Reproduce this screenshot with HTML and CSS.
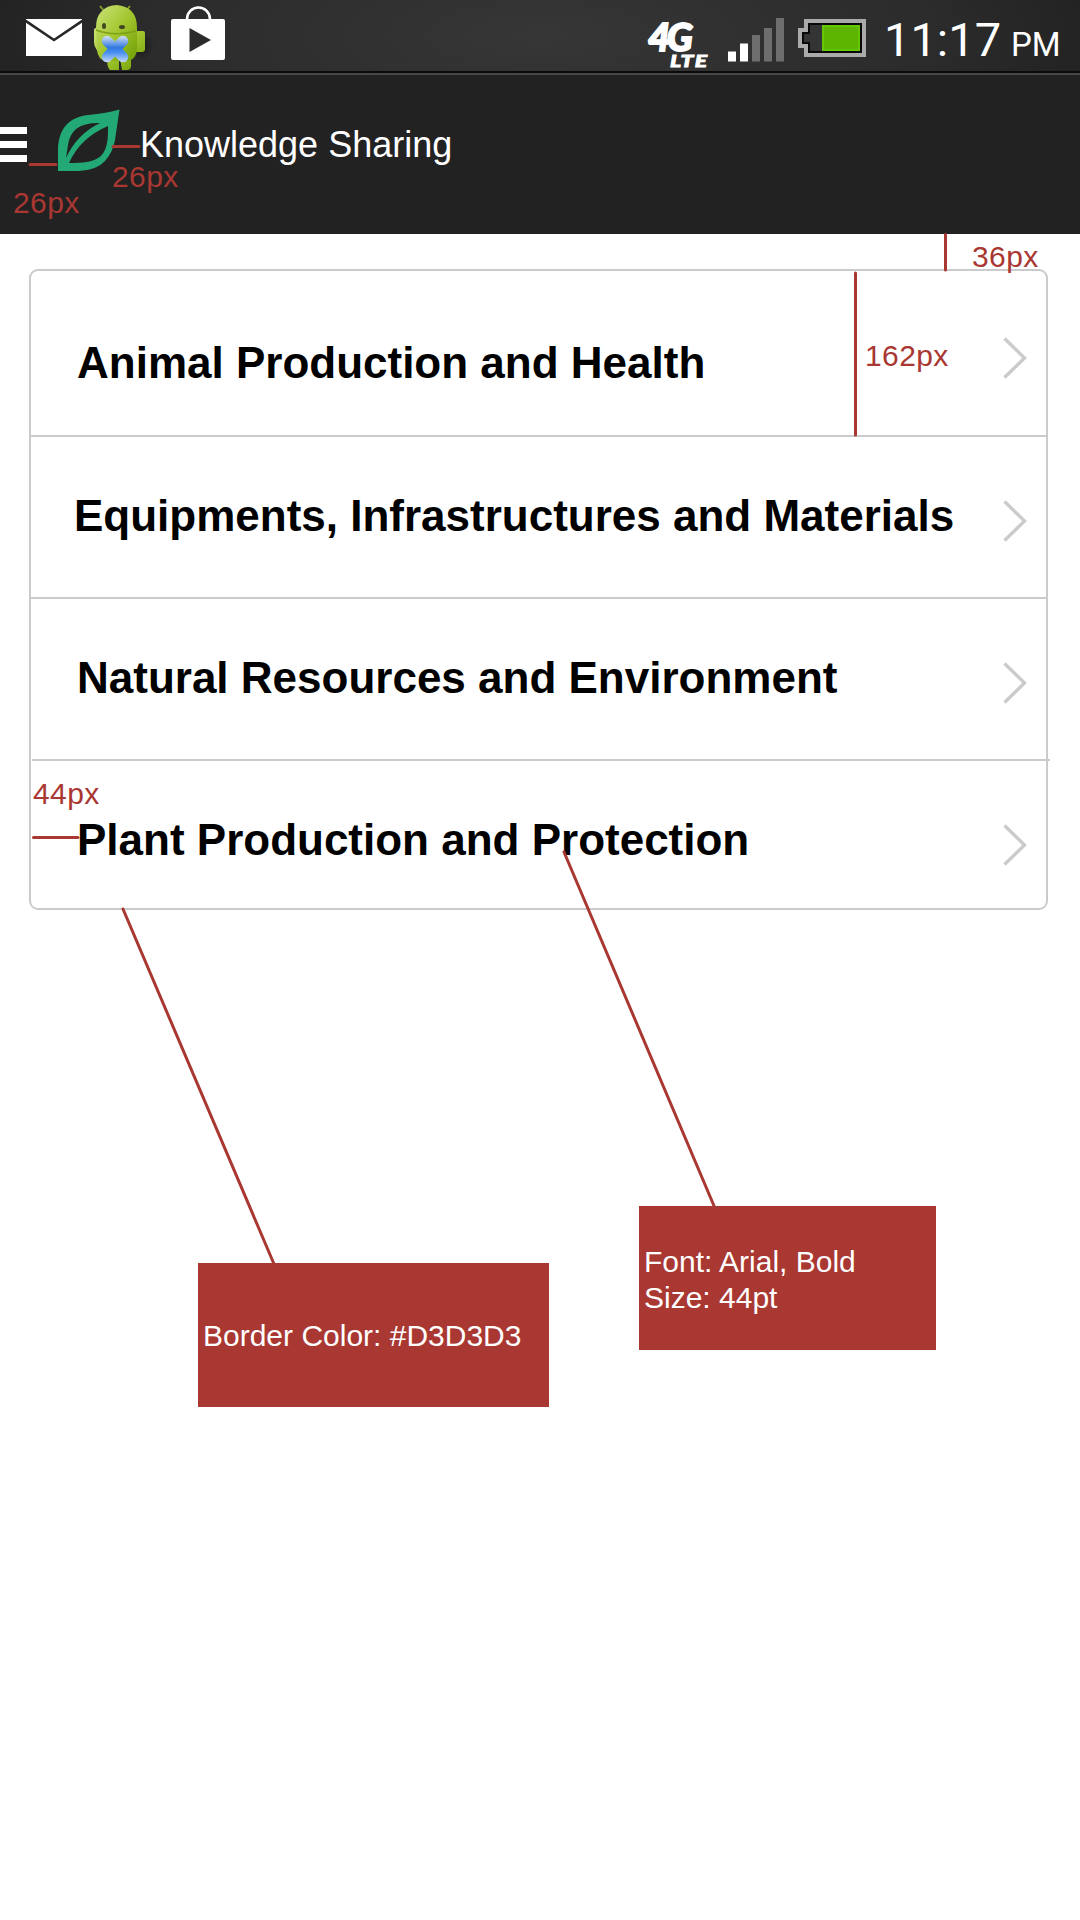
FILE: index.html
```html
<!DOCTYPE html>
<html lang="en">
<head>
<meta charset="utf-8">
<title>Knowledge Sharing</title>
<link rel="stylesheet" href="styles.css">
</head>
<body>
<div class="screen">
  <div class="status-bar">
    <div class="notifications">
      <svg class="mail" width="56" height="37" viewBox="0 0 56 37"><path fill="#fff" d="M0 0H56V37H0Z"/><path d="M-1 1.500L28 21L57 1.500" fill="none" stroke="#282828" stroke-width="2.600"/></svg>
      <svg class="robot" width="64" height="70" viewBox="0 0 64 70">
        <defs>
          <linearGradient id="green" x1="0" y1="0" x2="1" y2="1"><stop offset="0" stop-color="#cbe37a"/><stop offset=".5" stop-color="#a3c62f"/><stop offset="1" stop-color="#6f9d04"/></linearGradient>
          <linearGradient id="blue" gradientUnits="userSpaceOnUse" x1="0" y1="36" x2="0" y2="62"><stop offset="0" stop-color="#d3e0f5"/><stop offset=".45" stop-color="#2f78e0"/><stop offset=".65" stop-color="#4c92f2"/><stop offset="1" stop-color="#c2d8f8"/></linearGradient>
          <radialGradient id="shade"><stop offset="0" stop-color="#000" stop-opacity=".5"/><stop offset="1" stop-color="#000" stop-opacity="0"/></radialGradient>
        </defs>
        <ellipse cx="51" cy="46" rx="13" ry="14" fill="url(#shade)"/>
        <path d="M10 6l4 5M40 6l-4 5" stroke="#7d9c2a" stroke-width="2"/>
        <path fill="url(#green)" d="M4 30q0-2 2-2h3v25q-5-6-5-11ZM46 33q0-2 2-2h5q2 0 2 2v16q0 3-3 3h-6ZM18 58h11v12h-9q-4-4-2-12ZM30 58h11v9q-1 3-4 3h-5Z"/>
        <path fill="url(#green)" d="M6 28Q6 17 11 12Q17 5 27 5Q38 6 43 13Q47 18 47 28V50Q46 60 37 61H16Q8 60 7 50Z"/>
        <path d="M6 30Q25 37 46 31" fill="none" stroke="#7da018" stroke-width="1.400"/>
        <ellipse cx="14" cy="26" rx="2" ry="3" fill="#424822"/><ellipse cx="32" cy="27" rx="3" ry="2" fill="#424822"/>
        <path d="M17 41L33 57M33 41L17 57" stroke="url(#blue)" stroke-width="10.500" stroke-linecap="round"/>
      </svg>
      <svg class="bag" width="54" height="55" viewBox="0 0 54 55"><path d="M16 15V13a11.500 11.500 0 0 1 23 0v2" fill="none" stroke="#fff" stroke-width="2.600"/><rect y="13" width="54" height="41" rx="2" fill="#fff"/><path d="M18.500 22V46L40 34Z" fill="#2c2c2c"/></svg>
    </div>
    <div class="system">
      <div class="network"><span class="gen">4G</span><span class="lte">LTE</span></div>
      <svg class="signal" width="56" height="44" viewBox="0 0 56 44"><path fill="#fff" d="M0 33.500h8V43.500H0ZM12 25.500h8V43.500h-8Z"/><path fill="#6e6e6e" d="M24 17h8V43.500h-8ZM36 10h8V43.500h-8ZM48 0h8V43.500h-8Z"/></svg>
      <svg class="battery" width="68" height="38" viewBox="0 0 68 38"><path fill="#aaa" d="M6 0H68V38H6V29H0V9H6Z"/><path fill="#080808" d="M10 4H64V34H10V25H4V13H10Z"/><path fill="#343434" d="M12 6H24V32H12V23H6V15H12Z"/><path fill="#65c704" d="M24 6H62V32H24Z"/><path fill="#5db501" d="M26 8H60V30H26Z"/></svg>
      <div class="clock">11:17<span class="meridiem">PM</span></div>
    </div>
  </div>
  <header class="app-bar">
    <svg class="menu" width="27" height="35" viewBox="0 0 27 35"><path fill="#fff" d="M0 0H27V7H0ZM0 14H27V21H0ZM0 28H27V35H0Z"/></svg>
    <svg class="leaf" width="63" height="63" viewBox="0 0 63 63"><path fill="#22a976" fill-rule="evenodd" d="M62.500 .500Q50 4 31 6C12 8 1 20 1 42V62H22Q40 61 48 52Q56 43 58 31ZM43 14Q14 13 11 36L9 49Q20 25 43 14ZM51 17Q23 29 12 54C40 54 51 50 51 22Z"/></svg>
    <h1 class="title">Knowledge Sharing</h1>
  </header>
  <ul class="topics">
    <li class="topic first"><span class="name">Animal Production and Health</span><svg class="chevron" width="24" height="42" viewBox="0 0 24 42"><path d="M1.500 1.500L21.500 21L1.500 40.500"/></svg></li>
    <li class="topic second"><span class="name">Equipments, Infrastructures and Materials</span><svg class="chevron" width="24" height="42" viewBox="0 0 24 42"><path d="M1.500 1.500L21.500 21L1.500 40.500"/></svg></li>
    <li class="topic third"><span class="name">Natural Resources and Environment</span><svg class="chevron" width="24" height="42" viewBox="0 0 24 42"><path d="M1.500 1.500L21.500 21L1.500 40.500"/></svg></li>
    <li class="topic fourth"><span class="name">Plant Production and Protection</span><svg class="chevron" width="24" height="42" viewBox="0 0 24 42"><path d="M1.500 1.500L21.500 21L1.500 40.500"/></svg></li>
  </ul>
  <svg class="guides" width="1080" height="1920" viewBox="0 0 1080 1920"><path d="M30 164.500H56M113 146.500H139M945.500 234.500V270M855.500 273V435M33.500 837.500H78M123 909L274 1264M564 852L714.500 1207"/></svg>
  <span class="note menu-gap">26px</span>
  <span class="note logo-gap">26px</span>
  <span class="note top-gap">36px</span>
  <span class="note row-height">162px</span>
  <span class="note text-inset">44px</span>
  <div class="callout border-spec">Border Color: #D3D3D3</div>
  <div class="callout font-spec">Font: Arial, Bold<br>Size: 44pt</div>
</div>
</body>
</html>
```
FILE: styles.css
```css
* { box-sizing: border-box; }
body { margin: 0; background: #fff; font-family: "Liberation Sans", Arial, sans-serif; }
.screen { position: relative; width: 1080px; height: 1920px; overflow: hidden; }

.status-bar {
  display: flex;
  justify-content: space-between;
  height: 73px;
  padding: 0 20px 0 26px;
  border-bottom: 2px solid #0b0b0b;
  background: radial-gradient(ellipse 620px 190px at 50% 50%, #363636, #2b2b2b 65%, #1f1f1f);
}
.notifications, .system { display: flex; align-items: flex-start; }
.mail { margin-top: 19px; }
.robot { margin-left: 8px; }
.bag { margin: 6px 0 0 17px; }
.network {
  display: flex;
  flex-direction: column;
  align-items: flex-start;
  width: 62px;
  margin: 20px 18px 0 0;
  color: #fff;
  font-family: Lato, sans-serif;
  font-weight: 900;
  font-style: italic;
}
.gen { font-size: 37px; line-height: 33px; letter-spacing: -3.5px; transform: scaleX(1.04); transform-origin: left; -webkit-text-stroke: 1.8px #fff; }
.lte { margin-left: 22px; font-size: 17px; line-height: 15px; letter-spacing: 1px; transform: scaleX(1.35); transform-origin: left; -webkit-text-stroke: .8px #fff; }
.signal { margin: 18px 14px 0 0; }
.battery { margin: 19px 18px 0 0; }
.clock { width: 176px; color: #fff; font: 47px/56px Roboto, sans-serif; margin-top: 12px; white-space: nowrap; }
.meridiem { margin-left: 10px; font-size: 33px; }

.app-bar {
  display: flex;
  align-items: flex-start;
  height: 161px;
  border-top: 2px solid #484848;
  background: #222;
}
.menu { margin-top: 52px; }
.leaf { margin: 34px 0 0 30px; }
.title { margin: 49px 0 0 20px; color: #fff; font-size: 36px; line-height: 42px; font-weight: 400; }

.topics {
  display: flex;
  flex-direction: column;
  width: 1019px;
  height: 641px;
  margin: 35px 0 0 29px;
  padding: 0;
  border: 2px solid #cbcbcb;
  border-radius: 9px;
  list-style: none;
}
.topic { display: flex; flex-shrink: 0; justify-content: space-between; align-items: flex-start; height: 162px; padding: 0 19.5px 0 46px; border-bottom: 2px solid #cbcbcb; }
.name { font-size: 44px; line-height: 50px; font-weight: 700; color: #000; white-space: nowrap; }
.chevron { margin-top: 63px; fill: none; stroke: #cbcbcb; stroke-width: 3.4; stroke-linecap: butt; }
.first { height: 166px; }
.first .name { margin-top: 67px; }
.first .chevron { margin-top: 66px; }
.second { padding-left: 43px; }
.second .name, .third .name, .fourth .name { margin-top: 54px; }
.third { height: 160px; border-bottom: 0; }
.fourth { width: 1018px; height: 149px; margin-left: 1px; padding: 0 23.5px 0 45px; border: 0; border-top: 2px solid #cbcbcb; }

.guides { position: absolute; left: 0; top: 0; fill: none; stroke: #a93732; stroke-width: 3; stroke-linecap: round; pointer-events: none; }
.note { position: absolute; color: #a93732; font-size: 30px; line-height: 34px; letter-spacing: .4px; }
.menu-gap { left: 13px; top: 186px; }
.logo-gap { left: 112px; top: 160px; }
.top-gap { left: 972px; top: 240px; }
.row-height { left: 865px; top: 339px; }
.text-inset { left: 33px; top: 777px; }
.callout { position: absolute; display: flex; align-items: center; height: 144px; padding: 2px 0 0 5px; background: #a93732; color: #fff; font-size: 30px; line-height: 36px; }
.border-spec { left: 198px; top: 1263px; width: 351px; }
.font-spec { left: 639px; top: 1206px; width: 297px; padding-top: 4px; }
```
